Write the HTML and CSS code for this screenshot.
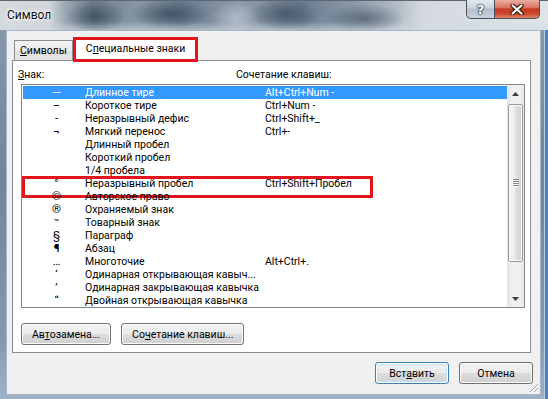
FILE: index.html
```html
<!DOCTYPE html>
<html lang="ru">
<head>
  <meta charset="UTF-8">
  <meta name="viewport" content="width=device-width, initial-scale=1.0">
  <title>Символ</title>
  <link rel="stylesheet" href="styles.css">
</head>
<body>
  <div class="window">
    <div class="titlebar">
      <span class="title">Символ</span>
      <div class="caption">
        <div class="cap-btn cap-help">?</div>
        <div class="cap-btn cap-close">
          <svg width="14" height="11" viewBox="0 0 14 11">
            <path d="M2.5 1.5 L11.5 9.5 M11.5 1.5 L2.5 9.5" stroke="#3b1a14" stroke-width="4.4" stroke-linecap="round"/>
            <path d="M2.5 1.5 L11.5 9.5 M11.5 1.5 L2.5 9.5" stroke="#fff" stroke-width="2.2" stroke-linecap="round"/>
          </svg>
        </div>
      </div>
    </div>

    <div class="client">
      <div class="tabs">
        <div class="tab"><u>С</u>имволы</div>
        <div class="tab active">С<u>п</u>ециальные знаки</div>
      </div>

      <div class="panel">
        <div class="labels">
          <span><u>З</u>нак:</span>
          <span>Сочетание клавиш:</span>
        </div>

        <div class="listbox">
          <ul class="rows">
            <li class="row selected"><span class="sym">—</span><span class="name">Длинное тире</span><span class="keys">Alt+Ctrl+Num -</span></li>
            <li class="row"><span class="sym">–</span><span class="name">Короткое тире</span><span class="keys">Ctrl+Num -</span></li>
            <li class="row"><span class="sym">-</span><span class="name">Неразрывный дефис</span><span class="keys">Ctrl+Shift+_</span></li>
            <li class="row"><span class="sym">¬</span><span class="name">Мягкий перенос</span><span class="keys">Ctrl+-</span></li>
            <li class="row"><span class="sym"></span><span class="name">Длинный пробел</span><span class="keys"></span></li>
            <li class="row"><span class="sym"></span><span class="name">Короткий пробел</span><span class="keys"></span></li>
            <li class="row"><span class="sym"></span><span class="name">1/4 пробела</span><span class="keys"></span></li>
            <li class="row marked"><span class="sym">°</span><span class="name">Неразрывный пробел</span><span class="keys">Ctrl+Shift+Пробел</span></li>
            <li class="row"><span class="sym">©</span><span class="name">Авторское право</span><span class="keys"></span></li>
            <li class="row"><span class="sym">®</span><span class="name">Охраняемый знак</span><span class="keys"></span></li>
            <li class="row"><span class="sym small">™</span><span class="name">Товарный знак</span><span class="keys"></span></li>
            <li class="row"><span class="sym">§</span><span class="name">Параграф</span><span class="keys"></span></li>
            <li class="row"><span class="sym bold">¶</span><span class="name">Абзац</span><span class="keys"></span></li>
            <li class="row"><span class="sym">…</span><span class="name">Многоточие</span><span class="keys">Alt+Ctrl+.</span></li>
            <li class="row"><span class="sym">‘</span><span class="name">Одинарная открывающая кавыч...</span><span class="keys"></span></li>
            <li class="row"><span class="sym">’</span><span class="name">Одинарная закрывающая кавычка</span><span class="keys"></span></li>
            <li class="row"><span class="sym">“</span><span class="name">Двойная открывающая кавычка</span><span class="keys"></span></li>
          </ul>

          <div class="scrollbar">
            <div class="sb-arrow">
              <svg width="7" height="4" viewBox="0 0 7 4"><polygon points="0,4 3.5,0 7,4" fill="#3d3d3d"/></svg>
            </div>
            <div class="sb-thumb"><div class="sb-grip"></div></div>
            <div class="sb-arrow">
              <svg width="7" height="4" viewBox="0 0 7 4"><polygon points="0,0 7,0 3.5,4" fill="#3d3d3d"/></svg>
            </div>
          </div>
        </div>

        <div class="panel-buttons">
          <button class="btn">Ав<u>т</u>озамена...</button>
          <button class="btn">Со<u>ч</u>етание клавиш...</button>
        </div>
      </div>

      <div class="dialog-buttons">
        <button class="btn btn-dialog btn-default">Вст<u>а</u>вить</button>
        <button class="btn btn-dialog">Отмена</button>
      </div>

      <div class="grip">
        <svg width="11" height="11" viewBox="0 0 11 11">
          <path d="M10 2 L2 10 M10 6 L6 10" stroke="#9aa3ad" stroke-width="1"/>
          <path d="M11 3 L3 11 M11 7 L7 11" stroke="#fff" stroke-width="1"/>
        </svg>
      </div>
    </div>
  </div>
</body>
</html>
```

FILE: styles.css
```css
* {
  box-sizing: border-box;
}
html, body {
  margin: 0;
  height: 100%;
}
body {
  font-family: Roboto, "Noto Sans", sans-serif;
  font-size: 10.5px;
  color: #000;
  background: #7a8ca0;
}
u {
  text-decoration: underline;
  text-underline-offset: 1px;
}

/* window frame (aero glass) */
.window {
  width: 548px;
  height: 399px;
  display: flex;
  flex-direction: column;
  background:
    linear-gradient(90deg, transparent calc(100% - 4px), #bcd0e8 calc(100% - 4px), #bcd0e8 calc(100% - 3px), #4f80c2 calc(100% - 3px)),
    linear-gradient(180deg, #8c9bac, #71849a 45%, #8598ae 85%, #9fb1c6);
}
.titlebar {
  height: 30px;
  display: flex;
  justify-content: space-between;
  align-items: flex-start;
  box-shadow: inset 0 1px #5d6773;
  background:
    radial-gradient(ellipse 30px 16px at 95px 16px, rgba(40,55,72,0.6), transparent),
    radial-gradient(ellipse 40px 14px at 170px 14px, rgba(35,50,66,0.55), transparent),
    radial-gradient(ellipse 25px 16px at 235px 18px, rgba(220,228,236,0.45), transparent),
    radial-gradient(ellipse 35px 16px at 285px 14px, rgba(40,55,72,0.55), transparent),
    radial-gradient(ellipse 40px 14px at 365px 18px, rgba(45,60,78,0.5), transparent),
    linear-gradient(180deg, rgba(255,255,255,0) 70%, rgba(210,218,226,0.6)),
    linear-gradient(90deg, #d6dadf 0, #d0d5da 9%, #9ba7b3 12%, #6f7f90 17%, #8796a6 25%, #697a8d 33%, #8d9bab 44%, #6c7d90 55%, #8897a7 64%, #a9b4bf 71%, #d3d9df 77%, #dfe4e9 100%);
}
.title {
  margin: 7px 0 0 7px;
  font-size: 12px;
  line-height: 16px;
  color: #0c0c0c;
  text-shadow: 0 0 5px #fff, 0 0 3px #fff, 0 0 2px #fff;
}
.caption {
  display: flex;
  margin-right: 8px;
}
.cap-btn {
  height: 19px;
  display: flex;
  align-items: center;
  justify-content: center;
  border: 1px solid #4a5260;
  border-top: none;
}
.cap-help {
  width: 29px;
  border-radius: 0 0 0 5px;
  background: linear-gradient(#e4e9ef, #ccd4dd 45%, #b5bfcb 50%, #c8d2dd);
  color: #fff;
  font: bold 13px "DejaVu Sans", sans-serif;
  text-shadow: 0 0 1px #27303b, 0 0 2px #27303b, 0 0 2px #27303b;
}
.cap-close {
  width: 45px;
  border-left: none;
  border-radius: 0 0 5px 0;
  background: linear-gradient(#eab0a3, #d9735f 42%, #c33a22 50%, #c9452b 75%, #e08466);
}

/* client area */
.client {
  flex: 1;
  margin: 0 7px 4px 6px;
  background: #f0f0f0;
  border: 1px solid #a7b6c7;
  display: flex;
  flex-direction: column;
  position: relative;
}
.tabs {
  height: 30px;
  display: flex;
  align-items: flex-end;
  padding-left: 7px;
  margin-bottom: -1px;
  position: relative;
  z-index: 1;
}
.tab {
  height: 20px;
  margin-bottom: 1px;
  padding: 0 5px;
  line-height: 19px;
  border: 1px solid #898c95;
  border-bottom: none;
  background: linear-gradient(#f3f3f3, #ebebeb 50%, #dddddd 50%, #e4e4e4);
}
.tab.active {
  height: 24px;
  margin-bottom: 0;
  padding: 0 12px;
  line-height: 21px;
  background: #fff;
  position: relative;
}
.tab.active::after {
  content: "";
  position: absolute;
  left: -1px;
  right: -1px;
  top: -1px;
  bottom: -1px;
  border: 3px solid #e2141d;
}

.panel {
  height: 293px;
  margin: 0 9px 0 5px;
  padding: 7px 5px 0 5px;
  background: #fff;
  border: 1px solid #898c95;
}
.labels {
  display: grid;
  grid-template-columns: 218px auto;
  height: 13px;
  line-height: 13px;
}

.listbox {
  height: 224px;
  margin: 3px 0 0 3px;
  border: 1px solid #828790;
  display: flex;
}
.rows {
  flex: 1;
  list-style: none;
  margin: 0;
  padding: 1px 0 0 1px;
  overflow: hidden;
}
.row {
  display: flex;
  height: 13px;
  line-height: 13px;
  white-space: nowrap;
  position: relative;
}
.row > span {
  height: 13px;
  overflow: hidden;
}
.row.selected {
  background: #3399ff;
  color: #fff;
}
.row.marked::after {
  content: "";
  position: absolute;
  left: -1px;
  top: -1px;
  width: 345px;
  height: 16px;
  border: 3px solid #e2141d;
}
.sym {
  width: 62px;
  padding-left: 5px;
  text-align: center;
  font-size: 11.5px;
}
.sym.small {
  font-size: 8px;
}
.sym.bold {
  font-weight: bold;
}
.name {
  width: 180px;
}

.scrollbar {
  width: 17px;
  display: flex;
  flex-direction: column;
  background: linear-gradient(90deg, #e4e4e4, #f0f0f0 35%, #f0f0f0 70%, #e9e9e9);
}
.sb-arrow {
  height: 17px;
  display: flex;
  align-items: center;
  justify-content: center;
}
.sb-thumb {
  height: 158px;
  margin: 2px 1px auto 1px;
  border: 1px solid #9a9a9a;
  border-radius: 2px;
  background: linear-gradient(90deg, #f6f6f6, #ececec 45%, #dcdcdc 55%, #d4d4d4);
  box-shadow: inset 0 0 0 1px #fafafa;
  display: flex;
  align-items: center;
  justify-content: center;
}
.sb-grip {
  width: 6px;
  height: 8px;
  background: repeating-linear-gradient(#8a8a8a 0 1px, #f4f4f4 1px 2px);
}

/* buttons */
.btn {
  height: 22px;
  padding: 0 10px;
  font: inherit;
  color: #000;
  border: 1px solid #707070;
  border-radius: 3px;
  background: linear-gradient(#f2f2f2, #ebebeb 50%, #dddddd 50%, #cfcfcf);
  box-shadow: inset 0 0 0 1px #fbfbfb;
}
.panel-buttons {
  display: flex;
  gap: 10px;
  margin: 15px 0 0 3px;
}
.dialog-buttons {
  display: flex;
  justify-content: flex-end;
  gap: 10px;
  margin-top: 9px;
  padding-right: 7px;
}
.btn-dialog {
  width: 74px;
}
.btn-default {
  border-color: #3c7fb1;
  box-shadow: inset 0 0 0 1px #fff, inset 0 0 2px 2px #c0e3f7;
}
.grip {
  position: absolute;
  right: 1px;
  bottom: 1px;
  width: 11px;
  height: 11px;
}
```
